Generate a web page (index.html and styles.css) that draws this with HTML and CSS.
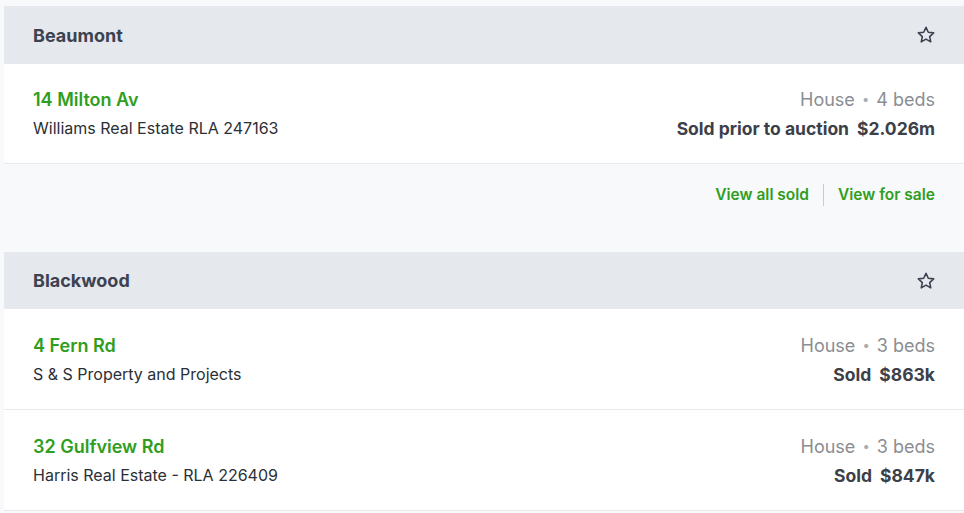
FILE: index.html
```html
<!DOCTYPE html>
<html>
<head>
<meta charset="utf-8">
<link rel="stylesheet" href="styles.css">
</head>
<body>
<div class="page">
  <section class="group">
    <div class="group-head">
      <span class="suburb">Beaumont</span>
      <svg class="star" viewBox="0 0 24 24" width="20" height="20"><path d="M12 2.8l2.75 5.9 6.45.75-4.8 4.4 1.3 6.35L12 17l-5.7 3.2 1.3-6.35-4.8-4.4 6.45-.75z" fill="none" stroke="currentColor" stroke-width="1.9" stroke-linejoin="round"/></svg>
    </div>
    <div class="row">
      <div class="col-left">
        <div class="addr">14 Milton Av</div>
        <div class="agent">Williams Real Estate RLA 247163</div>
      </div>
      <div class="col-right">
        <div class="meta">House <span class="dot">•</span> 4 beds</div>
        <div class="price">Sold prior to auction<span class="amt">$2.026m</span></div>
      </div>
    </div>
    <div class="links">
      <a class="link">View all sold</a>
      <span class="sep"></span>
      <a class="link">View for sale</a>
    </div>
  </section>
  <section class="group">
    <div class="group-head">
      <span class="suburb">Blackwood</span>
      <svg class="star" viewBox="0 0 24 24" width="20" height="20"><path d="M12 2.8l2.75 5.9 6.45.75-4.8 4.4 1.3 6.35L12 17l-5.7 3.2 1.3-6.35-4.8-4.4 6.45-.75z" fill="none" stroke="currentColor" stroke-width="1.9" stroke-linejoin="round"/></svg>
    </div>
    <div class="row">
      <div class="col-left">
        <div class="addr">4 Fern Rd</div>
        <div class="agent">S &amp; S Property and Projects</div>
      </div>
      <div class="col-right">
        <div class="meta">House <span class="dot">•</span> 3 beds</div>
        <div class="price">Sold<span class="amt">$863k</span></div>
      </div>
    </div>
    <div class="row">
      <div class="col-left">
        <div class="addr">32 Gulfview Rd</div>
        <div class="agent">Harris Real Estate - RLA 226409</div>
      </div>
      <div class="col-right">
        <div class="meta">House <span class="dot">•</span> 3 beds</div>
        <div class="price">Sold<span class="amt">$847k</span></div>
      </div>
    </div>
  </section>
</div>
</body>
</html>
```
FILE: styles.css
```css
html, body {
  margin: 0;
  padding: 0;
  background: #f8f9fb;
}
body {
  font-family: Inter, "Noto Sans", sans-serif;
  color: #2b2f36;
}
.page {
  padding: 6px 0 0 4px;
  width: 960px;
}
.group-head {
  height: 58px;
  background: #e5e8ec;
  display: flex;
  align-items: center;
  justify-content: space-between;
  padding: 0 28px 0 29px;
}
.group + .group .group-head {
  height: 57px;
}
.suburb {
  font-size: 18px;
  font-weight: 700;
  color: #3c4250;
}
.star {
  color: #3c4250;
  display: block;
}
.row {
  background: #fff;
  border-bottom: 1px solid #e7e9ec;
  padding: 21px 29px 20px;
  display: flex;
  justify-content: space-between;
}
.group + .group .row {
  padding-top: 22px;
}
.addr, .agent, .meta, .price {
  height: 29px;
  line-height: 29px;
  white-space: nowrap;
}
.addr {
  font-size: 18px;
  font-weight: 600;
  color: #2f9e20;
}
.agent {
  font-size: 16px;
  color: #2b2f36;
}
.col-right {
  text-align: right;
}
.meta {
  font-size: 18px;
  color: #8a8d92;
}
.dot {
  color: #a9acb0;
  font-size: 13px;
  line-height: 0;
  margin: 0 2px;
  position: relative;
  top: -2px;
}
.price {
  font-size: 17.5px;
  font-weight: 700;
  color: #3c4049;
}
.amt {
  margin-left: 8px;
}
.links {
  display: flex;
  justify-content: flex-end;
  align-items: center;
  padding: 20px 29px 46px;
}
.link {
  font-size: 15.5px;
  font-weight: 600;
  color: #2f9e20;
  line-height: 22px;
}
.sep {
  width: 1px;
  height: 22px;
  background: #c9ccd0;
  margin: 0 14px;
}
```
